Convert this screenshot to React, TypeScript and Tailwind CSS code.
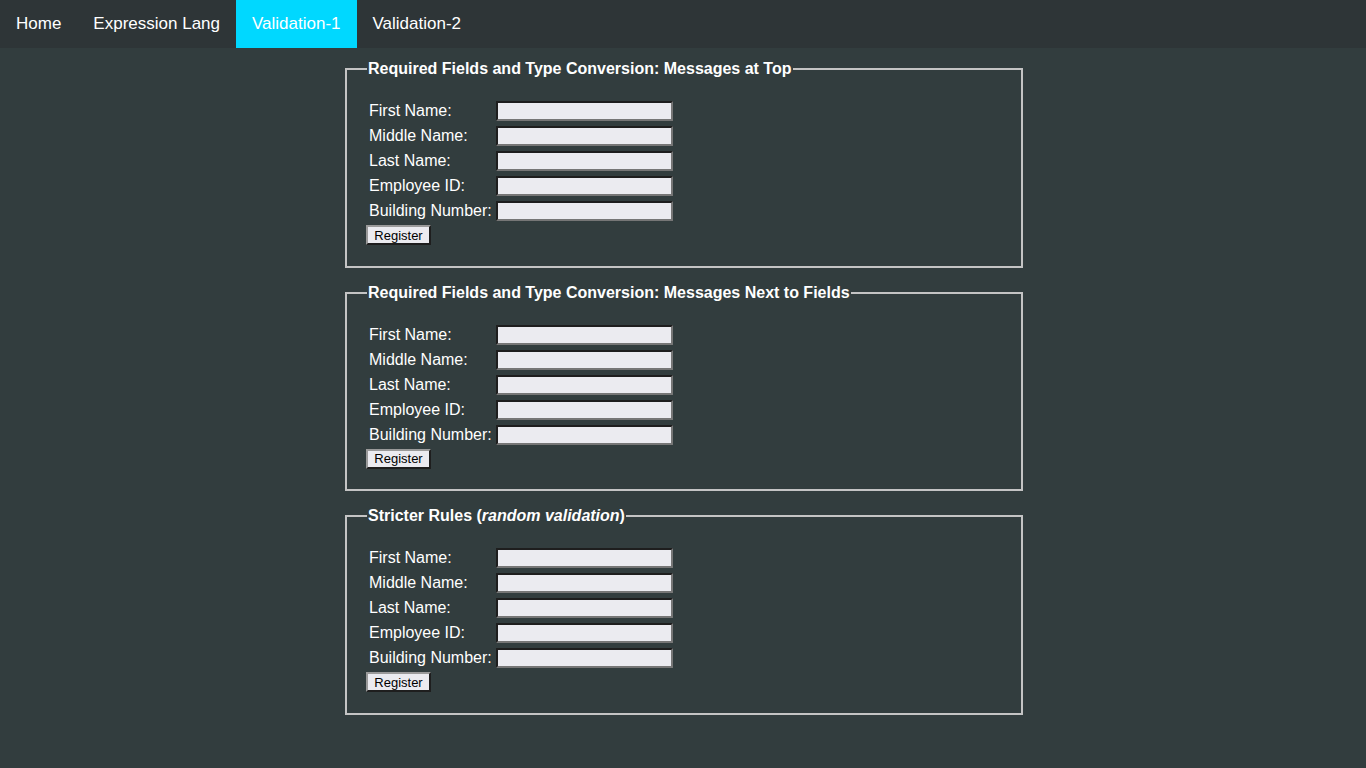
import React from "react";

const fields = ["First Name:", "Middle Name:", "Last Name:", "Employee ID:", "Building Number:"];

const Section = ({ title }: { title: React.ReactNode }) => {
  return (
    <fieldset className="w-[678px] mx-auto border-2 border-solid border-[#c4c4c4] px-[20px] pt-[23px] pb-[19px]">
      <legend className="px-[1px] text-[16px] font-bold text-white leading-[18px]">{title}</legend>
      <div className="flex flex-col gap-[5px]">
        {fields.map((f) => (
          <div key={f} className="flex items-center h-[20px]">
            <label className="w-[129px] pl-[2px] text-[16px] text-white">{f}</label>
            <input
              type="text"
              className="w-[177px] h-[20px] bg-[#ebebf0] border-2 border-solid border-t-[#1e1e1e] border-l-[#1e1e1e] border-b-[#767676] border-r-[#767676] outline-none"
            />
          </div>
        ))}
      </div>
      <button className="mt-[4px] -ml-[1px] h-[20px] w-[65px] bg-[#ebebf0] text-[13px] text-black leading-none border-2 border-solid border-t-[#9a9a9a] border-l-[#9a9a9a] border-b-[#1e1e1e] border-r-[#1e1e1e]">
        Register
      </button>
    </fieldset>
  );
};

const App = () => {
  const tabs = ["Home", "Expression Lang", "Validation-1", "Validation-2"];
  return (
    <div className="min-h-screen bg-[#323d3e] font-['Liberation_Sans',Arial,sans-serif]">
      {/* barra de navegación */}
      <nav className="flex h-[48px] bg-[#2e3537]">
        {tabs.map((t) => (
          <a
            key={t}
            className={
              t === "Validation-1"
                ? "flex items-center px-[16px] text-[17px] text-white bg-[#00d8ff]"
                : "flex items-center px-[16px] text-[17px] text-white"
            }
          >
            {t}
          </a>
        ))}
      </nav>
      <main className="flex flex-col gap-[16px] pt-[12px] pb-[40px] pl-[2px]">
        <Section title="Required Fields and Type Conversion: Messages at Top" />
        <Section title="Required Fields and Type Conversion: Messages Next to Fields" />
        <Section
          title={
            <>
              Stricter Rules (<i>random validation</i>)
            </>
          }
        />
      </main>
    </div>
  );
};

export default App;
